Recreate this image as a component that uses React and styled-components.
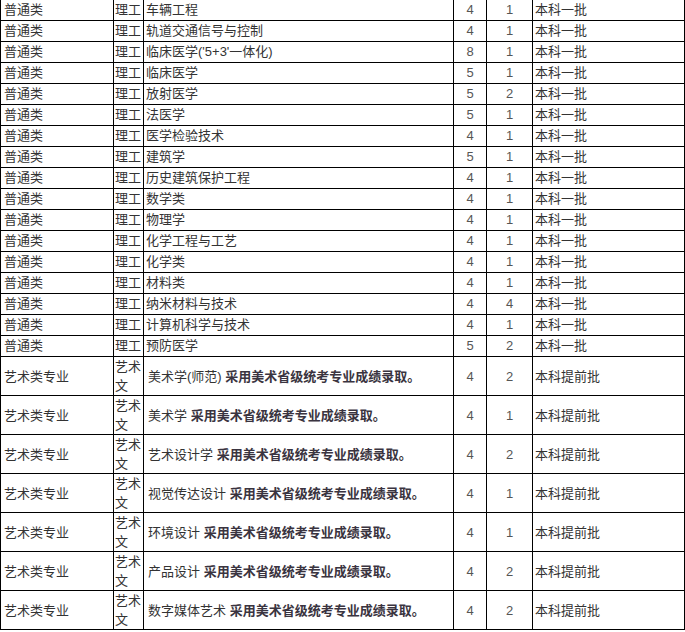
import React from 'react';
import styled, { createGlobalStyle } from 'styled-components';

const GlobalStyle = createGlobalStyle`
  html, body {
    margin: 0;
    padding: 0;
    background: #fff;
  }
  body {
    font-family: "Liberation Sans", "Noto Sans CJK SC", sans-serif;
    font-size: 13px;
    color: #333;
    overflow: hidden;
  }
`;

const Table = styled.table`
  width: 684px;
  margin-top: -1px;
  border-collapse: collapse;
  table-layout: fixed;
`;

const Cell = styled.td`
  border: 1px solid #000;
  padding: 0 0 0 ${p => (p.$pad != null ? p.$pad : 2)}px;
  height: ${p => (p.$tall ? 38 : 20)}px;
  line-height: ${p => (p.$tall ? 19 : 20)}px;
  vertical-align: ${p => (p.$top ? 'top' : 'middle')};
  text-align: ${p => (p.$center ? 'center' : 'left')};
  white-space: ${p => (p.$wrap ? 'normal' : 'nowrap')};
  overflow: hidden;
  color: #333;
`;

const Num = styled(Cell)`
  color: #555;
  padding: 0;
`;

const Note = styled.strong`
  font-weight: bold;
  color: #3a3440;
`;

const regular = [
  ['车辆工程', 4, 1],
  ['轨道交通信号与控制', 4, 1],
  ["临床医学('5+3'一体化)", 8, 1],
  ['临床医学', 5, 1],
  ['放射医学', 5, 2],
  ['法医学', 5, 1],
  ['医学检验技术', 4, 1],
  ['建筑学', 5, 1],
  ['历史建筑保护工程', 4, 1],
  ['数学类', 4, 1],
  ['物理学', 4, 1],
  ['化学工程与工艺', 4, 1],
  ['化学类', 4, 1],
  ['材料类', 4, 1],
  ['纳米材料与技术', 4, 4],
  ['计算机科学与技术', 4, 1],
  ['预防医学', 5, 2],
];

const art = [
  ['美术学(师范)', 4, 2],
  ['美术学', 4, 1],
  ['艺术设计学', 4, 2],
  ['视觉传达设计', 4, 1],
  ['环境设计', 4, 1],
  ['产品设计', 4, 2],
  ['数字媒体艺术', 4, 2],
];

export default function App() {
  return (
    <>
      <GlobalStyle />
      <Table>
        <colgroup>
          <col style={{ width: 113 }} />
          <col style={{ width: 30 }} />
          <col style={{ width: 310 }} />
          <col style={{ width: 33 }} />
          <col style={{ width: 46 }} />
          <col style={{ width: 152 }} />
        </colgroup>
        <tbody>
          {regular.map(([name, years, count]) => (
            <tr key={name}>
              <Cell $pad={3}>普通类</Cell>
              <Cell $pad={1}>理工</Cell>
              <Cell $pad={2}>{name}</Cell>
              <Num $center>{years}</Num>
              <Num $center>{count}</Num>
              <Cell $pad={2}>本科一批</Cell>
            </tr>
          ))}
          {art.map(([name, years, count]) => (
            <tr key={name}>
              <Cell $tall $pad={3}>艺术类专业</Cell>
              <Cell $tall $top $wrap $pad={1}>艺术文</Cell>
              <Cell $tall $pad={4}>
                {name} <Note>采用美术省级统考专业成绩录取。</Note>
              </Cell>
              <Num $tall $center>{years}</Num>
              <Num $tall $center>{count}</Num>
              <Cell $tall $pad={2}>本科提前批</Cell>
            </tr>
          ))}
        </tbody>
      </Table>
    </>
  );
}
